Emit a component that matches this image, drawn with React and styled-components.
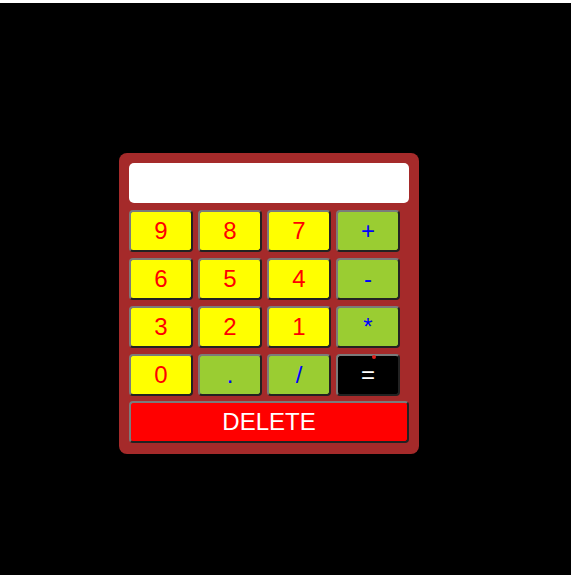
import React, { useState } from "react";
import styled, { createGlobalStyle } from "styled-components";

const GlobalStyle = createGlobalStyle`
  html, body {
    margin: 0;
    padding: 0;
    background: #ffffff;
  }
  body {
    padding-top: 3px;
    font-family: "Liberation Sans", Arial, sans-serif;
  }
`;

const StyledPage = styled.div`
  background-color: #000000;
  height: 572px;
  display: flex;
  justify-content: flex-start;
  padding-top: 150px;
  padding-left: 119px;
  box-sizing: border-box;
`;

const StyledCalculator = styled.div`
  width: 300px;
  height: 301px;
  box-sizing: border-box;
  background-color: #a52a2a;
  border-radius: 8px;
  padding: 10px;
  display: flex;
  flex-direction: column;
`;

const StyledDisplay = styled.div`
  height: 40px;
  background-color: #ffffff;
  border-radius: 5px;
  margin-bottom: 7px;
  font-size: 24px;
  color: #000;
  text-align: right;
  line-height: 40px;
  padding: 0 8px;
  box-sizing: border-box;
`;

const StyledGrid = styled.div`
  display: grid;
  grid-template-columns: repeat(4, 64px);
  column-gap: 5px;
  row-gap: 6px;
`;

const colors = {
  digit: { bg: "#ffff00", fg: "#ff0000" },
  op: { bg: "#9acd32", fg: "#0000ff" },
  equals: { bg: "#000000", fg: "#ffffff" },
  delete: { bg: "#ff0000", fg: "#ffffff" },
};

const StyledKey = styled.button`
  position: relative;
  height: 42px;
  margin: 0;
  padding: 0;
  box-sizing: border-box;
  border-width: 2px;
  border-style: solid;
  border-color: #7b7b7b #222222 #222222 #7b7b7b;
  border-radius: 4px;
  background-color: ${(p) => colors[p.$kind].bg};
  color: ${(p) => colors[p.$kind].fg};
  font-family: "Liberation Sans", Arial, sans-serif;
  font-size: 24px;
  cursor: pointer;
`;

const StyledDeleteKey = styled(StyledKey)`
  margin-top: 5px;
  width: 280px;
`;

const StyledDot = styled.span`
  position: absolute;
  top: -1px;
  left: 34px;
  width: 4px;
  height: 4px;
  border-radius: 50%;
  background-color: #e0201c;
`;

const keys = [
  ["9", "digit"],
  ["8", "digit"],
  ["7", "digit"],
  ["+", "op"],
  ["6", "digit"],
  ["5", "digit"],
  ["4", "digit"],
  ["-", "op"],
  ["3", "digit"],
  ["2", "digit"],
  ["1", "digit"],
  ["*", "op"],
  ["0", "digit"],
  [".", "op"],
  ["/", "op"],
  ["=", "equals"],
];

function App() {
  const [value, setValue] = useState("");

  const press = (k) => {
    if (k === "=") {
      try {
        // eslint-disable-next-line no-new-func
        setValue(String(Function(`return (${value})`)()));
      } catch (e) {
        setValue("");
      }
      return;
    }
    setValue(value + k);
  };

  return (
    <>
      <GlobalStyle />
      <StyledPage>
        <StyledCalculator>
          <StyledDisplay>{value}</StyledDisplay>
          <StyledGrid>
            {keys.map(([k, kind]) => (
              <StyledKey key={k} $kind={kind} onClick={() => press(k)}>
                {k}
                {k === "=" && <StyledDot />}
              </StyledKey>
            ))}
          </StyledGrid>
          <StyledDeleteKey $kind="delete" onClick={() => setValue(value.slice(0, -1))}>
            DELETE
          </StyledDeleteKey>
        </StyledCalculator>
      </StyledPage>
    </>
  );
}

export default App;
